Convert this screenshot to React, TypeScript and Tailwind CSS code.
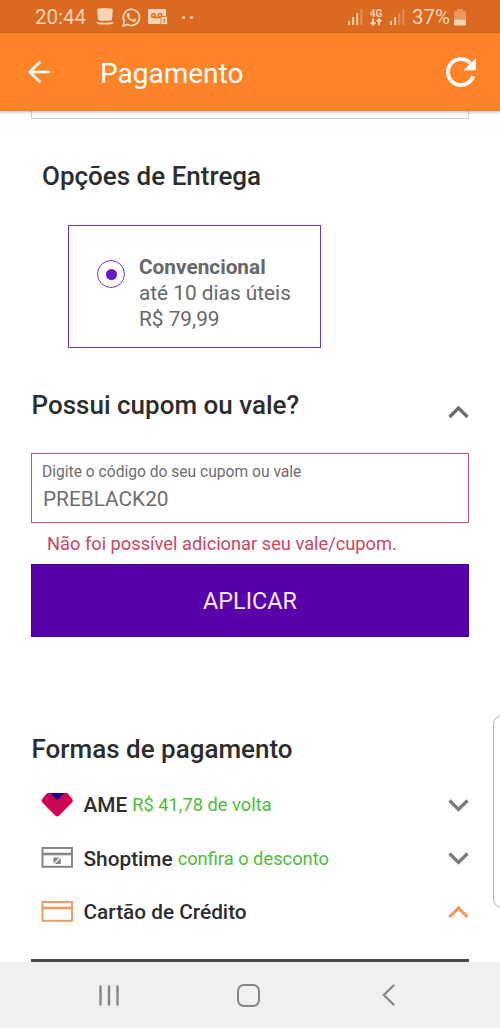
import { useState } from 'react';
import type { ReactNode } from 'react';

function Chevron({ up = false, className = '' }: { up?: boolean; className?: string }) {
  return (
    <svg width="22" height="14" viewBox="0 0 22 14" className={`shrink-0 ${className}`}>
      <path
        d={up ? 'M2.5 12 L11.5 3 L20.5 12' : 'M2.5 2.5 L11.5 11.5 L20.5 2.5'}
        fill="none"
        stroke="currentColor"
        strokeWidth="3.2"
      />
    </svg>
  );
}

function Signal({ bars }: { bars: number }) {
  return (
    <svg width="16" height="18" viewBox="0 0 16 18" fill="#f9d3b6">
      {[0, 1, 2, 3].map((i) => (
        <rect
          key={i}
          x={i * 4.1}
          y={13 - i * 4}
          width="2"
          height={4 + i * 4}
          opacity={i < bars ? 0.95 : 0.35}
        />
      ))}
    </svg>
  );
}

function StatusBar() {
  return (
    <div className="flex h-[33px] items-center bg-[#da6a20] pt-px pr-[34px] pl-[35px] text-[#f9d3b6]">
      <span className="w-[61px] text-[20.5px] leading-none whitespace-nowrap">20:44</span>
      <svg width="18" height="18" viewBox="0 0 18 18" fill="currentColor">
        <path d="M2.5 0.5 Q9 -0.5 15.5 0.5 Q17 0.8 16.8 2 L16.2 10.5 Q16 12.8 14 12.8 H4 Q2 12.8 1.8 10.5 L1.2 2 Q1 0.8 2.5 0.5 Z" />
        <path d="M0 14 Q9 15.4 18 14 Q17 16.4 14 16.4 H4 Q1 16.4 0 14 Z" />
      </svg>
      <svg width="19" height="19" viewBox="0 0 24 24" fill="currentColor" className="ml-[8px]">
        <path d="M17.472 14.382c-.297-.149-1.758-.867-2.03-.967-.273-.099-.471-.148-.67.15-.197.297-.767.966-.94 1.164-.173.199-.347.223-.644.075-.297-.15-1.255-.463-2.39-1.475-.883-.788-1.48-1.761-1.653-2.059-.173-.297-.018-.458.13-.606.134-.133.298-.347.446-.52.149-.174.198-.298.298-.497.099-.198.05-.371-.025-.52-.075-.149-.669-1.612-.916-2.207-.242-.579-.487-.5-.669-.51-.173-.008-.371-.01-.57-.01-.198 0-.52.074-.792.372-.272.297-1.04 1.016-1.04 2.479 0 1.462 1.065 2.875 1.213 3.074.149.198 2.096 3.2 5.077 4.487.709.306 1.262.489 1.694.625.712.227 1.36.195 1.871.118.571-.085 1.758-.719 2.006-1.413.248-.694.248-1.289.173-1.413-.074-.124-.272-.198-.57-.347z" />
        <path
          d="M1.5 22.5 L3 16.8 A10.2 10.2 0 1 1 7.2 20.9 Z"
          fill="none"
          stroke="currentColor"
          strokeWidth="2.2"
        />
      </svg>
      <svg width="20" height="18" viewBox="0 0 20 18" className="ml-[7px]">
        <path d="M1 1 H17 Q18 1 18 2 V9 H13 V16 H1 Q0 16 0 15 V2 Q0 1 1 1 Z" fill="#f9d3b6" />
        <g fill="none" stroke="#da6a20" strokeWidth="1.4">
          <circle cx="5.5" cy="7.5" r="1.8" />
          <circle cx="12" cy="7.5" r="1.8" />
          <path d="M5.5 9.5 H12" />
        </g>
        <rect x="13" y="8.5" width="6.5" height="8" rx="1" fill="#f9d3b6" stroke="#da6a20" strokeWidth="0.8" />
        <path d="M16.3 11 V14.5" stroke="#da6a20" strokeWidth="1.2" />
      </svg>
      <div className="ml-[14px] flex gap-[5px]">
        <span className="size-[3px] rounded-full bg-[#f9d3b6]" />
        <span className="size-[3px] rounded-full bg-[#f9d3b6]" />
      </div>
      <div className="ml-auto flex items-center">
        <Signal bars={3} />
        <div className="ml-[5px] flex w-[14px] flex-col items-center">
          <span className="text-[10px] leading-[9px] font-bold">4G</span>
          <svg width="12" height="8" viewBox="0 0 12 8" fill="none" stroke="currentColor" strokeWidth="1.8">
            <path d="M3 0.5 V6.5 M0.6 4.3 L3 6.8 L5.4 4.3 M9 7.5 V1.5 M6.6 3.7 L9 1.2 L11.4 3.7" />
          </svg>
        </div>
        <div className="ml-[7px]">
          <Signal bars={2} />
        </div>
        <span className="ml-[6px] w-[42px] text-[20.5px] leading-none whitespace-nowrap">37%</span>
        <svg width="12" height="17" viewBox="0 0 12 17" fill="currentColor">
          <path d="M3 0 H9 V2 H11 Q12 2 12 3 V10.5 H0 V3 Q0 2 1 2 H3 Z" opacity="0.45" />
          <path d="M0 10.5 H12 V15.5 Q12 16.5 11 16.5 H1 Q0 16.5 0 15.5 Z" />
        </svg>
      </div>
    </div>
  );
}

function AppBar() {
  return (
    <header className="relative z-10 flex h-[78px] items-center bg-[#ff8429] pr-[24px] pl-[28px] text-white shadow-[0_1px_3px_rgba(0,0,0,0.3)]">
      <svg
        width="22"
        height="22"
        viewBox="0 0 22 22"
        fill="none"
        stroke="currentColor"
        strokeWidth="2.5"
        strokeLinecap="round"
        strokeLinejoin="round"
      >
        <path d="M11.5 1.5 L1.8 11 L11.5 20.5 M2 11 H20.8" />
      </svg>
      <h1 className="mt-[3px] ml-[50px] text-[28px] leading-none">Pagamento</h1>
      <svg width="30" height="30" viewBox="0 0 30 30" className="ml-auto">
        <path
          d="M27.2 19.2 A13 13 0 1 1 24.2 6"
          fill="none"
          stroke="currentColor"
          strokeWidth="3.8"
        />
        <path d="M30 1 V13.2 H17.5 L22.5 8.2 L25.5 5.5 Z" fill="currentColor" />
      </svg>
    </header>
  );
}

function AmeIcon() {
  return (
    <svg width="32" height="24" viewBox="0 0 32 24">
      <path
        d="M8 0 H25 Q26.5 0 27.5 1.2 L31.2 6 Q32.6 8 30.8 9.8 L18 22.8 Q16.2 24.4 14.4 22.8 L1.6 9.8 Q-0.2 8 1.2 6 L5 1.2 Q6 0 8 0 Z"
        fill="#cd0757"
      />
      <path d="M9 0 H23.4 L17.7 6 Q16.2 7.4 14.7 6 Z" fill="#1c087e" />
    </svg>
  );
}

function CardIcon({ store = false }: { store?: boolean }) {
  return (
    <svg
      width="32"
      height="21"
      viewBox="0 0 32 21"
      fill="none"
      stroke={store ? '#858585' : '#f29b60'}
      strokeWidth="2"
      className="-mt-px"
    >
      <rect x="1.5" y="1" width="29.5" height="18.8" />
      <path d="M1.5 7 H31" strokeWidth="2.6" />
      {store && (
        <path d="M12.5 10.5 H18.5 L12.5 16.5 Z M19.8 11 V17 H13.8 Z" fill="#858585" stroke="none" />
      )}
    </svg>
  );
}

interface PaymentRowProps {
  icon: ReactNode;
  name: string;
  note?: string;
  open?: boolean;
}

function PaymentRow({ icon, name, note, open = false }: PaymentRowProps) {
  return (
    <div className="flex h-[53.5px] items-center pl-[10px]">
      {icon}
      <span className="mt-[2px] ml-[10.5px] text-[20.8px] font-medium text-[#2d2d2d]">{name}</span>
      {note && <span className="ml-[5px] text-[18.3px] text-[#4fbd3b]">{note}</span>}
      <Chevron up={open} className={open ? 'ml-auto text-[#f29b60]' : 'ml-auto text-[#7a7a7a]'} />
    </div>
  );
}

export default function App() {
  const [coupon, setCoupon] = useState('PREBLACK20');

  return (
    <div className="relative flex h-[1028px] w-[500px] flex-col overflow-hidden bg-white font-[Roboto,sans-serif]">
      <StatusBar />
      <AppBar />

      <main className="flex h-[851px] flex-col pr-[31px] pl-[31px]">
        <div className="h-[8px] shrink-0 border-x border-b border-[#cfcfcf]" />

        <h2 className="mt-[42px] ml-[11px] text-[26px] leading-[30px] font-medium text-[#2d2d2d]">
          Opções de Entrega
        </h2>
        <div className="mt-[34px] ml-[37px] flex h-[123px] w-[253px] border border-[#7a35b0] pt-[28px] pl-[28px]">
          <span className="mt-[6px] flex size-[28px] items-center justify-center rounded-full border-[1.5px] border-[#7a35b0]">
            <span className="size-[11px] rounded-full bg-[#6b15c8]" />
          </span>
          <div className="ml-[14px] text-[20.8px] leading-[26px] text-[#686868]">
            <div className="font-bold">Convencional</div>
            <div>até 10 dias úteis</div>
            <div>R$ 79,99</div>
          </div>
        </div>

        <div className="mt-[42px] flex h-[30px] justify-between">
          <h2 className="ml-[0.5px] text-[26px] leading-[30px] font-medium text-[#2d2d2d]">Possui cupom ou vale?</h2>
          <Chevron up className="mt-[15px] text-[#6a6a6a]" />
        </div>
        <label className="mt-[33px] flex h-[70px] shrink-0 flex-col border border-[#c5506a] pt-[8px] pl-[10px]">
          <span className="text-[15.6px] leading-[20px] text-[#6e6e6e]">Digite o código do seu cupom ou vale</span>
          <input
            value={coupon}
            onChange={(e) => setCoupon(e.target.value)}
            className="mt-[4px] ml-px h-[28px] text-[20.8px] text-[#6e6e6e] outline-none"
          />
        </label>
        <p className="mt-[9px] ml-[16px] text-[18.25px] leading-[24px] text-[#cf4463]">
          Não foi possível adicionar seu vale/cupom.
        </p>
        <button className="mt-[8px] h-[73px] shrink-0 border border-[#46008f] bg-[#5800a9] pt-[2px] text-[23.4px] text-[#f3eafa]">
          APLICAR
        </button>

        <h2 className="mt-[97px] ml-[0.5px] text-[26px] leading-[30px] font-medium text-[#2d2d2d]">
          Formas de pagamento
        </h2>
        <div className="mt-[14px]">
          <PaymentRow icon={<AmeIcon />} name="AME" note="R$ 41,78 de volta" />
          <PaymentRow icon={<CardIcon store />} name="Shoptime" note="confira o desconto" />
          <PaymentRow icon={<CardIcon />} name="Cartão de Crédito" open />
        </div>
        <div className="mt-auto h-[3px] shrink-0 bg-[#4b494c]" />
      </main>

      {/* edge panel handle */}
      <div className="absolute top-[715px] left-[493px] h-[193px] w-[20px] rounded-[9px] border border-[#b5b5b5] bg-white" />

      <nav className="flex h-[66px] items-center bg-[#f0f0f0] pr-[105px] pl-[99px] text-[#858585]">
        <svg width="20" height="21" viewBox="0 0 20 21" fill="none" stroke="currentColor" strokeWidth="2.4" strokeLinecap="round">
          <path d="M1.5 1.5 V19.5 M10 1.5 V19.5 M18.5 1.5 V19.5" />
        </svg>
        <span className="ml-[118px] size-[23px] rounded-[7px] border-[2.4px] border-[#858585]" />
        <svg width="13" height="22" viewBox="0 0 13 22" fill="none" stroke="currentColor" strokeWidth="2.2" strokeLinecap="round" className="ml-auto">
          <path d="M11.5 1.5 L1.8 11 L11.5 20.5" />
        </svg>
      </nav>
    </div>
  );
}
